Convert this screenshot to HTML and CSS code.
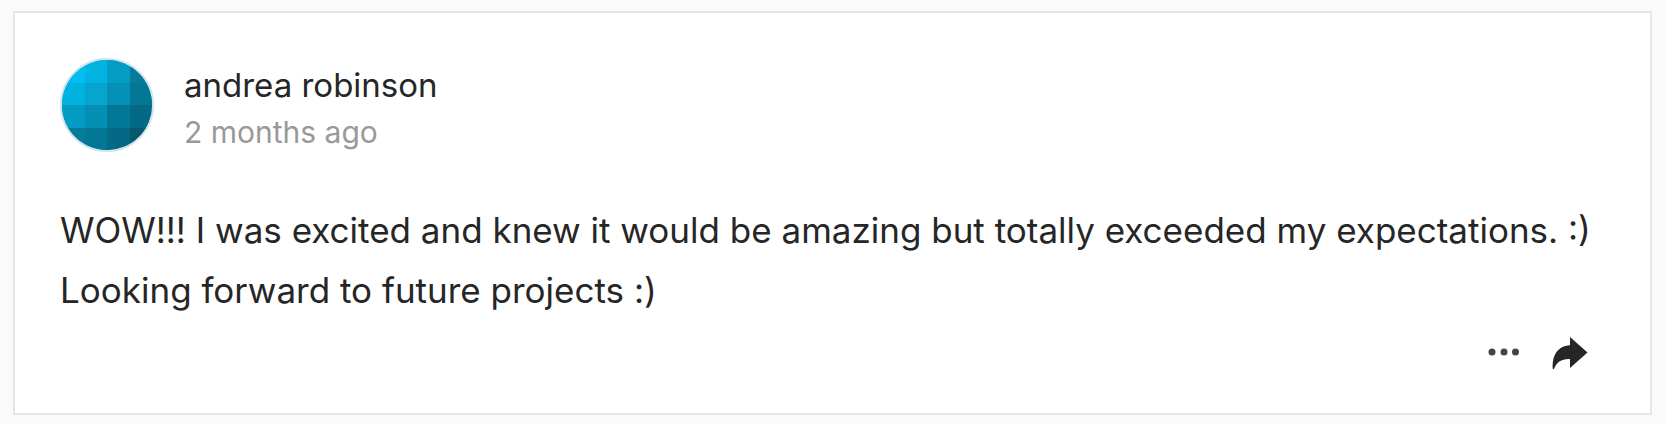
FILE: index.html
```html
<!DOCTYPE html>
<html lang="en">
<head>
    <meta charset="UTF-8">
    <meta name="viewport" content="width=device-width, initial-scale=1.0">
    <title>Comments</title>
    <link rel="stylesheet" href="styles.css">
</head>
<body>
    <article class="comment">
        <header class="comment-header">
            <svg class="avatar" viewBox="0 0 4 4" shape-rendering="crispEdges" aria-hidden="true">
                <rect width="4" height="4" fill="#0590b5"/>
                <!-- row 1 -->
                <rect x="0" y="0" width="1" height="1" fill="#00bff0"/>
                <rect x="1" y="0" width="1" height="1" fill="#00b3e0"/>
                <rect x="2" y="0" width="1" height="1" fill="#039cc4"/>
                <rect x="3" y="0" width="1" height="1" fill="#067b9a"/>
                <!-- row 2 -->
                <rect x="0" y="1" width="1" height="1" fill="#00b2df"/>
                <rect x="1" y="1" width="1" height="1" fill="#05a5d0"/>
                <rect x="2" y="1" width="1" height="1" fill="#0590b5"/>
                <rect x="3" y="1" width="1" height="1" fill="#037895"/>
                <!-- row 3 -->
                <rect x="0" y="2" width="1" height="1" fill="#039bc2"/>
                <rect x="1" y="2" width="1" height="1" fill="#058fb4"/>
                <rect x="2" y="2" width="1" height="1" fill="#037896"/>
                <rect x="3" y="2" width="1" height="1" fill="#036984"/>
                <!-- row 4 -->
                <rect x="0" y="3" width="1" height="1" fill="#067b9a"/>
                <rect x="1" y="3" width="1" height="1" fill="#037895"/>
                <rect x="2" y="3" width="1" height="1" fill="#036984"/>
                <rect x="3" y="3" width="1" height="1" fill="#06586d"/>
            </svg>
            <div class="author">
                <h2 class="name">andrea robinson</h2>
                <time class="date">2 months ago</time>
            </div>
        </header>

        <p class="text">WOW!!! I was excited and knew it would be amazing but totally exceeded my expectations. :) Looking forward to future projects :)</p>

        <footer class="actions">
            <button type="button" class="action" aria-label="More">
                <svg width="32" height="32" viewBox="0 0 32 32" fill="#444">
                    <circle cx="4" cy="15" r="3.5"/>
                    <circle cx="16" cy="15" r="3.5"/>
                    <circle cx="27.5" cy="15" r="3.5"/>
                </svg>
            </button>
            <button type="button" class="action" aria-label="Share">
                <svg width="36" height="32" viewBox="0 0 36 32" fill="#262626">
                    <path d="M18 0L35.5 15.5L18 31V22C10 21.5 4.5 25 2 32H.8C0 19 5 9 18 8.3Z"/>
                </svg>
            </button>
        </footer>
    </article>
</body>
</html>
```

FILE: styles.css
```css
* {
    box-sizing: border-box;
}

body {
    margin: 11px 14px 9px 13px;
    background-color: #fafafa;
    color: #262626;
    font-family: Inter, "Liberation Sans", sans-serif;
}

.comment {
    padding: 45px;
    padding-bottom: 44px;
    background-color: #fff;
    border: 2px solid #e6e6e6;
}

.comment-header {
    display: flex;
    align-items: center;
    gap: 30px;
}

.avatar {
    flex: none;
    width: 94px;
    height: 94px;
    border: 2px solid #cfe4ec;
    border-radius: 50%;
}

.name {
    margin: 0;
    font-size: 33px;
    font-weight: 400;
    line-height: 54px;
}

.date {
    display: block;
    color: #999;
    font-size: 30px;
    line-height: 40px;
}

.text {
    margin: 48px 0 0;
    font-size: 35px;
    line-height: 60px;
}

.actions {
    display: flex;
    justify-content: flex-end;
    align-items: center;
    gap: 32px;
    margin-top: 17px;
    padding-right: 17px;
}

.action {
    display: flex;
    padding: 0;
    background: none;
    border: none;
    cursor: pointer;
}
```
